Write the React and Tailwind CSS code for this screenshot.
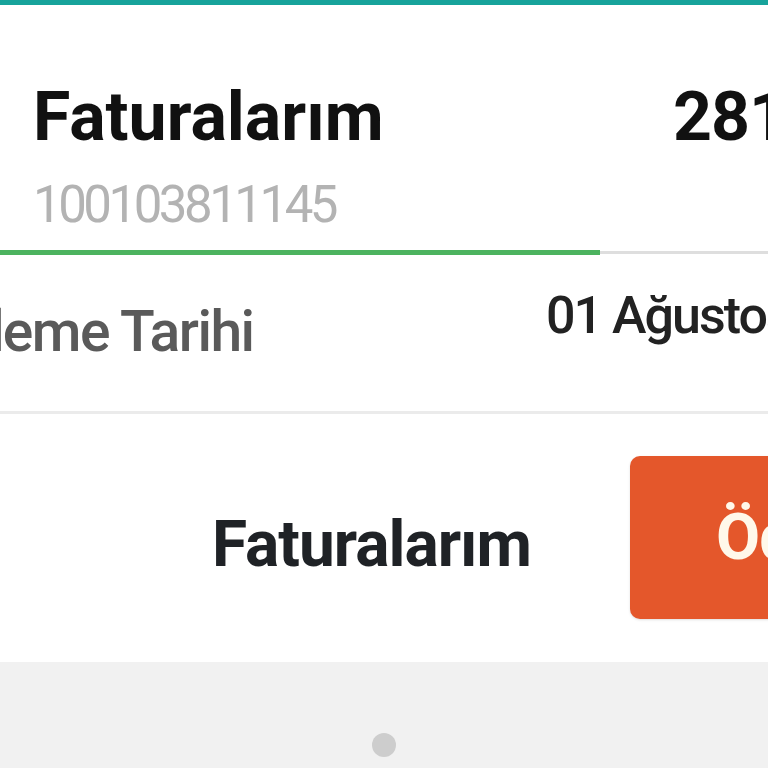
export default function App() {
  const font = { fontFamily: "Roboto, 'Liberation Sans', sans-serif" };

  return (
    <div className="w-[768px] h-[768px] overflow-hidden bg-white flex flex-col" style={font}>
      {/* teal top strip */}
      <div className="h-[5px] bg-[#17a39b] shrink-0" />

      {/* invoice header */}
      <div className="flex shrink-0">
        <div className="w-[673px] shrink-0 pl-[33px]">
          <h1 className="mt-[78px] text-[68px] leading-none font-bold text-[#111] whitespace-nowrap">
            Faturalarım
          </h1>
          <p className="mt-[28px] text-[51px] leading-none text-[#b3b3b3] tracking-[-3.5px] whitespace-nowrap">
            100103811145
          </p>
        </div>
        <span className="mt-[78px] text-[68px] leading-none font-bold text-[#111] tracking-[-1px] whitespace-nowrap">
          281,45 TL
        </span>
      </div>

      {/* progress */}
      <div className="mt-[19px] flex items-center h-[6px] shrink-0">
        <div className="w-[600px] h-[5px] bg-[#4cb35f]" />
        <div className="flex-1 h-[3px] bg-[#dedede]" />
      </div>

      {/* due date row */}
      <div className="h-[156px] flex shrink-0">
        <div className="w-[250px] shrink-0 flex items-start text-[57px] leading-none font-medium text-[#5a5a5a] tracking-[-1.5px]">
          <div className="w-[109px] shrink-0 flex justify-end mt-[48px]">
            <span className="whitespace-nowrap">Son Ödeme</span>
          </div>
          <span className="ml-[11px] mt-[48px] whitespace-nowrap">Tarihi</span>
        </div>
        <div className="pl-[296px]">
          <span className="block mt-[35px] text-[52px] leading-none font-medium text-[#222] tracking-[-2px] whitespace-nowrap">
            01 Ağustos 2024
          </span>
        </div>
      </div>

      <div className="h-[3px] bg-[#ebebeb] shrink-0" />

      {/* actions */}
      <div className="h-[248px] flex items-start shrink-0">
        <span className="ml-[212px] mt-[99px] text-[64px] leading-none font-bold text-[#1f2226] tracking-[-1px] whitespace-nowrap">
          Faturalarım
        </span>
        <button className="ml-auto mt-[42px] w-[160px] -mr-[22px] h-[163px] rounded-[10px] bg-[#e4572b] flex items-center pl-[86px] shadow-sm">
          <span className="text-[64px] leading-none font-bold text-[#fff8ea] tracking-[-1px] whitespace-nowrap">
            Öde
          </span>
        </button>
      </div>

      {/* pager */}
      <div className="flex-1 bg-[#f1f1f1] flex justify-center items-end pb-[11px]">
        <div className="w-[24px] h-[24px] rounded-full bg-[#cdcdcd]" />
      </div>
    </div>
  );
}
